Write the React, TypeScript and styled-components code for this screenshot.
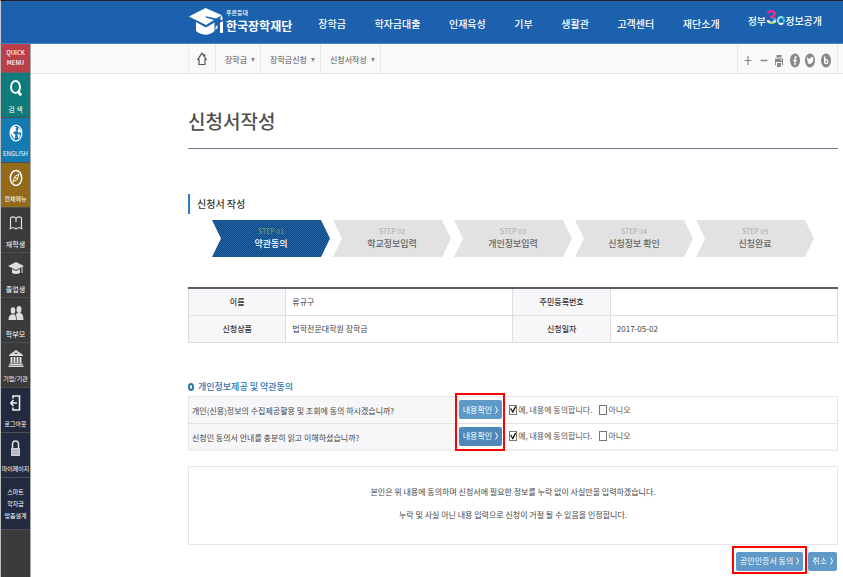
import React from "react";
import styled, { createGlobalStyle } from "styled-components";

const GlobalStyle = createGlobalStyle`
  *, *::before, *::after { box-sizing: border-box; }
  body {
    margin: 0;
    background: #fff;
    color: #444;
    font-family: "Noto Sans CJK KR", "Noto Sans", sans-serif;
    font-size: 8px;
    line-height: 12px;
  }
  a { color: inherit; text-decoration: none; }
  button { font: inherit; cursor: pointer; }
  h1, h2, h3, p, ul, ol { margin: 0; padding: 0; }
  ul, ol { list-style: none; }
`;

const Page = styled.div`
  display: flex;
  flex-direction: column;
  min-height: 100vh;
`;

const Header = styled.header`
  display: flex;
  align-items: center;
  height: 44px;
  padding: 0 21px 0 188px;
  background: #1b61ae;
  border-top: 1px solid #222;
  border-bottom: 1px solid #4a82c4;
  border-left: 1px solid #c4ccd6;
  color: #fff;
`;

const Logo = styled.a`
  display: flex;
  align-items: center;
  gap: 2px;
`;

const LogoText = styled.span`
  display: flex;
  flex-direction: column;
  font-size: 12px;
  font-weight: 700;
  line-height: 18px;
  white-space: nowrap;
`;

const LogoTag = styled.small`
  font-size: 6px;
  font-weight: 500;
  line-height: 8px;
`;

const MainNav = styled.nav`
  display: flex;
  flex: 1;
  justify-content: space-between;
  margin: 4px 28px 0 26px;
  font-size: 10px;
  font-weight: 500;
  line-height: 16px;
  white-space: nowrap;
`;

const GovLink = styled.a`
  display: flex;
  align-items: center;
  height: 42px;
  padding-bottom: 2px;
  font-size: 10px;
  font-weight: 500;
  white-space: nowrap;
`;

const GovThree = styled.span`
  margin-top: -8px;
  background: linear-gradient(#e6318c 50%, #5b9be0 60%, #e8f2f8 68%, #8bc53f 80%);
  background-clip: text;
  color: transparent;
  font-family: "Liberation Sans", sans-serif;
  font-size: 20px;
  font-weight: 700;
  line-height: 24px;
`;

const GovZero = styled.span`
  width: 8px;
  height: 9px;
  margin-bottom: 2px;
  border: 2px solid #8fe3f2;
  border-right-color: #3fc4e8;
  border-bottom-color: #f4f9fb;
  border-radius: 50%;
  color: transparent;
  font-size: 6px;
  line-height: 5px;
  overflow: hidden;
`;

const Body = styled.div`
  display: flex;
  flex: 1;
`;

const Sidebar = styled.nav`
  width: 31px;
  flex: none;
  background: #3b3b3b;
  border-left: 1px solid #bdbdbd;
  border-right: 1px solid #a8a8a8;
  color: #fff;
`;

const QuickTitle = styled.h2`
  display: flex;
  flex-direction: column;
  justify-content: center;
  height: 29px;
  background: #b93f48;
  border-bottom: 1px solid #7b5a5c;
  font-size: 6px;
  font-weight: 500;
  line-height: 10px;
  text-align: center;
`;

const SideLink = styled.a<{ $bg: string; $tall?: boolean; $long?: boolean }>`
  display: flex;
  flex-direction: column;
  align-items: center;
  justify-content: ${(p) => (p.$tall ? "center" : "flex-start")};
  height: ${(p) => (p.$tall ? 52 : 45)}px;
  padding-top: ${(p) => (p.$tall ? 0 : 6)}px;
  background: ${(p) => p.$bg};
  border-bottom: 1px solid #4b4e50;
  font-size: ${(p) => (p.$long ? 6 : 7)}px;
  line-height: 12px;
  text-align: center;
  white-space: nowrap;

  svg { margin-bottom: 5px; }
`;

const Main = styled.div`
  flex: 1;
  min-width: 0;
`;

const SubBar = styled.div`
  display: flex;
  justify-content: space-between;
  height: 30px;
  padding: 0 5px 0 157px;
  background: #f9f9f9;
  border-bottom: 1px solid #e3e3e3;
`;

const Crumbs = styled.div`
  display: flex;
  border-left: 1px solid #ececec;
`;

const HomeLink = styled.a`
  display: flex;
  align-items: center;
  justify-content: center;
  width: 27px;
  border-right: 1px solid #e8e8e8;
`;

const Crumb = styled.button`
  display: flex;
  align-items: center;
  gap: 4px;
  padding: 3px 5px 0 9px;
  background: none;
  border: 0;
  border-right: 1px solid #e8e8e8;
  color: #555;
  white-space: nowrap;

  &::after {
    content: "";
    border: 2px solid transparent;
    border-top: 4px solid #888;
    border-bottom: 0;
  }
`;

const Tools = styled.div`
  display: flex;
  align-items: center;
  justify-content: space-between;
  width: 101px;
  padding: 3px 6px 0 5px;
  border: solid #e8e8e8;
  border-width: 0 1px;
`;

const ToolButton = styled.button`
  display: flex;
  padding: 0;
  background: none;
  border: 0;
`;

const Content = styled.main`
  padding: 0 5px 8px 157px;
`;

const PageTitle = styled.h1`
  height: 75px;
  padding-top: 32px;
  border-bottom: 1px solid #77778c;
  color: #505050;
  font-size: 19px;
  font-weight: 500;
  line-height: 30px;
`;

const SectionTitle = styled.h2`
  margin-top: 45px;
  padding-left: 7px;
  border-left: 2px solid #2580cf;
  color: #333;
  font-size: 10px;
  font-weight: 500;
  line-height: 20px;
`;

const Steps = styled.ol`
  display: flex;
  gap: 3px;
  margin: 6px 24px 30px;
`;

const Step = styled.li<{ $active?: boolean }>`
  display: flex;
  flex: 1;
  flex-direction: column;
  align-items: center;
  height: 37px;
  padding-top: 5px;
  clip-path: polygon(0 0, calc(100% - 9px) 0, 100% 50%, calc(100% - 9px) 100%, 0 100%, 9px 50%);
  background: ${(p) =>
    p.$active
      ? "repeating-conic-gradient(#104b88 0 25%, #2263a4 0 50%) 0 0 / 2px 2px"
      : "#e2e2e2"};
  color: ${(p) => (p.$active ? "#fff" : "#666")};
  font-size: 9px;
  font-weight: 500;
  line-height: 14px;
  white-space: nowrap;

  small {
    color: ${(p) => (p.$active ? "#7da866" : "#aaa")};
    font-size: 7px;
    font-weight: 400;
    line-height: 12px;
  }
`;

const InfoTable = styled.table`
  width: 100%;
  table-layout: fixed;
  border-collapse: collapse;

  th, td {
    height: 27px;
    padding: 0 6px;
    border: 1px solid #dedee0;
    font-weight: 400;
    text-align: left;
  }
  tr:first-child > * { border-top: 2px solid #5d5d66; }
  th {
    background: #f7f7fa;
    color: #333;
    font-weight: 500;
    text-align: center;
  }
`;

const AgreeTitle = styled.h3`
  display: flex;
  align-items: center;
  gap: 4px;
  margin-top: 35px;
  color: #2a75b3;
  font-size: 9px;
  font-weight: 500;
  line-height: 18px;

  &::before {
    content: "";
    width: 6px;
    height: 8px;
    border: 2px solid #2a75a8;
    border-radius: 50%;
  }
`;

const AgreeList = styled.div`
  position: relative;
  border: 1px solid #e6e6e8;
  border-bottom: 2px solid #f0f0f2;
`;

const AgreeRow = styled.fieldset`
  display: grid;
  grid-template-columns: 41% 1fr;
  height: 26px;
  min-width: 0;
  margin: 0;
  padding: 0;
  border: 0;

  & + & { border-top: 1px solid #e3e3e5; }
`;

const Question = styled.p`
  display: flex;
  align-items: center;
  padding: 3px 0 0 3px;
  background: #f7f7fa;
  color: #444;
  white-space: nowrap;
`;

const Answers = styled.div`
  display: flex;
  align-items: center;
  padding-left: 4px;
  color: #555;
`;

const BlueButton = styled.button<{ $dark?: boolean }>`
  display: flex;
  align-items: center;
  justify-content: center;
  gap: 3px;
  height: 19px;
  padding: 0 4px;
  background: ${(p) => (p.$dark ? "#4e89b9" : "#5e99c8")};
  border: 0;
  border-radius: 2px;
  color: #fff;
  white-space: nowrap;
`;

const Check = styled.label`
  display: flex;
  align-items: center;
  gap: 1px;
  margin-left: 7px;
  white-space: nowrap;
`;

const CheckBox = styled.input`
  appearance: none;
  width: 8px;
  height: 10px;
  margin: 0;
  border: 1px solid #777;
  background: #fff;

  &:checked::after {
    content: "";
    display: block;
    height: 8px;
    background: #111;
    clip-path: polygon(0 40%, 18% 30%, 40% 65%, 85% 5%, 100% 20%, 45% 98%);
  }
`;

const RowMark = styled.span`
  position: absolute;
  left: 41%;
  top: -4px;
  width: 50px;
  height: 58px;
  border: 2px solid #f00;
  pointer-events: none;
`;

const Notice = styled.div`
  margin-top: 15px;
  padding: 13px 0 18px;
  border: 1px solid #e6e6e8;
  line-height: 23px;
  text-align: center;
`;

const Actions = styled.div`
  display: flex;
  justify-content: flex-end;
  gap: 5px;
  margin-top: 7px;
  padding-right: 1px;
`;

const Marked = styled.div`
  position: relative;

  &::after {
    content: "";
    position: absolute;
    inset: -6px -4px -3px;
    border: 2px solid #f00;
    pointer-events: none;
  }
`;

const Chevron = () => (
  <svg width="3" height="8" viewBox="0 0 3 8" fill="none" stroke="#fff" aria-hidden="true">
    <path d="M.5.5 2.5 4 .5 7.5" />
  </svg>
);

const CapLogo = () => (
  <svg width="35" height="28" viewBox="0 0 35 28" fill="#fff" aria-hidden="true">
    <path d="M0 8.500 16.500 0 33 7.300 27 10.500 17 8.200 16.500 9.400 25 12 17 17Z" />
    <path d="M7 14 17 19.500 25.500 14.500V23Q17 30.500 7 23Z" />
    <path d="M26.500 19 28.500 17V20L26.500 22Z" />
    <path d="M31.500 9 33 7.500 33.500 10V12H31.500ZM31 14.500 34 13V25H31Z" />
  </svg>
);

const sideIcons: Record<string, React.ReactNode> = {
  search: (
    <g fill="none" stroke="#fff" strokeWidth="2">
      <ellipse cx="7.5" cy="8" rx="4.5" ry="6" />
      <path d="m9.800 12 3.200 4.500" strokeWidth="2.800" />
    </g>
  ),
  globe: (
    <g>
      <ellipse cx="8" cy="9" rx="5.800" ry="7.800" fill="none" stroke="#fff" strokeWidth="1.300" />
      <path fill="#fff" d="M3 5 6 2.500 8.500 3 7.500 5 8.500 6.500 6 8 5 9 7.500 11 7 13.500 6 15.500 4.800 12 3 9.500ZM10 3l2.500 2.500 1 3.500-1.500-1-1.500 1-1-2.500 1-1ZM9.500 10l2.500.500-.5 3-1.500 1Z" />
    </g>
  ),
  compass: (
    <g fill="none" stroke="#fff">
      <ellipse cx="8" cy="9" rx="5.700" ry="7.500" strokeWidth="1.500" />
      <path d="M11 5 9.300 10.500 5 13 6.700 7.500Z" />
      <circle cx="8" cy="9" r=".5" />
    </g>
  ),
  book: (
    <path fill="none" stroke="#ddd" strokeWidth="1.200" d="M8 4.500C6.500 2.500 4 2.500 2.500 3.800V14l-.8 1C4 13.500 6.500 13.500 8 15c1.500-1.500 4-1.500 6.300 0l-.8-1V3.800C12 2.500 9.500 2.500 8 4.500V8" />
  ),
  cap: (
    <g fill="#ddd">
      <path d="M0 7 8 3l8 4-8 4Z" />
      <path d="m4 10 4 2 4-2v4Q8 16 4 14ZM13.500 8h1v6h-1Z" />
    </g>
  ),
  people: (
    <g fill="#ddd">
      <ellipse cx="5" cy="6.500" rx="2.300" ry="3.300" />
      <ellipse cx="11" cy="5.500" rx="2.500" ry="3.500" />
      <path d="M.5 16q0-5 3-5.500h3Q8 11 8 16ZM8.700 16q0-4-1-5.500L9.500 9h3Q15.500 10 15.500 16Z" />
    </g>
  ),
  bank: (
    <path fill="#ddd" d="M1 6 8 1l7 5v1H1Zm5-1h4L8 3.500ZM2.500 8h2v6h-2Zm3 0h2v6h-2Zm3 0h2v6h-2Zm3 0h2v6h-2ZM1.500 14.500h13V16h-13ZM.5 16.500h15V18H.5Z" />
  ),
  logout: (
    <g fill="none" stroke="#eee" strokeWidth="1.600">
      <path d="M5 4.500V2h6.500v14H5v-2.500" />
      <path d="M9 9H3m2.500-3L2.800 9l2.700 3" />
    </g>
  ),
  lock: (
    <g>
      <path d="M4.500 9V5.500Q4.500 2 7.500 2t3 3.500V9" fill="none" stroke="#e5e5e5" strokeWidth="1.500" />
      <path fill="#c9cbd0" d="M3 9h9v8H3Z" />
      <path d="M4 11.500h7M4 14h7" stroke="#9da1ad" />
    </g>
  ),
};

const sideItems = [
  { icon: "search", label: "검 색", bg: "#0e7b7b" },
  { icon: "globe", label: "ENGLISH", bg: "#137bb2" },
  { icon: "compass", label: "전체메뉴", bg: "#93691a" },
  { icon: "book", label: "재학생", bg: "#3b3b3b" },
  { icon: "cap", label: "졸업생", bg: "#3b3b3b" },
  { icon: "people", label: "학부모", bg: "#3b3b3b" },
  { icon: "bank", label: "기업/기관", bg: "#3b3b3b" },
  { icon: "logout", label: "로그아웃", bg: "#222a3f" },
  { icon: "lock", label: "마이페이지", bg: "#222a3f" },
];

const navItems = ["장학금", "학자금대출", "인재육성", "기부", "생활관", "고객센터", "재단소개"];
const crumbs = ["장학금", "장학금신청", "신청서작성"];
const steps = ["약관동의", "학교정보입력", "개인정보입력", "신청정보 확인", "신청완료"];
const questions = [
  "개인(신용)정보의 수집제공활용 및 조회에 동의 하시겠습니까?",
  "신청인 동의서 안내를 충분히 읽고 이해하셨습니까?",
];

const tools: { label: string; art: React.ReactNode }[] = [
  { label: "확대", art: <path d="M5 3v9M1.500 7.500h7" stroke="#888" strokeWidth="1.200" /> },
  { label: "축소", art: <path d="M1.500 7.500h7" stroke="#888" strokeWidth="1.500" /> },
  {
    label: "인쇄",
    art: (
      <g fill="#888">
        <path d="M2.500 2h5v2.500h-5ZM1 5.500h8V12H8V9H2v3H1ZM3 10h4v4H3Z" />
        <path d="M6.500 7h1.500" stroke="#fff" />
      </g>
    ),
  },
  {
    label: "페이스북",
    art: (
      <g>
        <ellipse cx="5" cy="7.500" rx="5" ry="7" fill="#888" />
        <path d="M7 4Q5 3.500 5 5.500V12M3.300 7.500h3.400" fill="none" stroke="#fff" strokeWidth="1.300" />
      </g>
    ),
  },
  {
    label: "트위터",
    art: (
      <g>
        <ellipse cx="5" cy="7.500" rx="5" ry="7" fill="#888" />
        <path d="M2 4q1.200 2 3 2 0-2 1.500-2L8.500 4.500Q8.500 11 4.500 11L2 10l1.500-.8L2.200 7.500Z" fill="#fff" />
      </g>
    ),
  },
  {
    label: "블로그",
    art: (
      <g>
        <ellipse cx="5" cy="7.500" rx="5" ry="7" fill="#888" />
        <path d="M3.700 3.500V10.500" stroke="#fff" strokeWidth="1.300" />
        <ellipse cx="5.300" cy="8.700" rx="1.500" ry="2" fill="none" stroke="#fff" strokeWidth="1.200" />
      </g>
    ),
  },
];

export default function App() {
  return (
    <Page>
      <GlobalStyle />
      <Header>
        <Logo href="#home">
          <CapLogo />
          <LogoText>
            <LogoTag>푸른등대</LogoTag>
            한국장학재단
          </LogoText>
        </Logo>
        <MainNav>
          {navItems.map((n) => (
            <a key={n} href="#menu">{n}</a>
          ))}
        </MainNav>
        <GovLink href="#open">
          정부<GovThree>3</GovThree><GovZero>0</GovZero>정보공개
        </GovLink>
      </Header>
      <Body>
        <Sidebar>
          <QuickTitle><span>QUICK</span><span>MENU</span></QuickTitle>
          {sideItems.map((s) => (
            <SideLink key={s.label} href="#quick" $bg={s.bg} $long={s.label.length > 3}>
              <svg width="16" height="19" viewBox="0 0 16 19" aria-hidden="true">{sideIcons[s.icon]}</svg>
              {s.label}
            </SideLink>
          ))}
          <SideLink href="#smart" $bg="#222a3f" $tall $long>
            <span>스마트</span>
            <span>학자금</span>
            <span>맞춤설계</span>
          </SideLink>
        </Sidebar>
        <Main>
          <SubBar>
            <Crumbs>
              <HomeLink href="#home" aria-label="홈">
                <svg width="10" height="14" viewBox="0 0 10 14" fill="none" stroke="#555" strokeWidth="1.200" aria-hidden="true">
                  <path d="M2 7.500H.8L5 1.200 9.200 7.500H8V12.500H2ZM7.500 4.500V2" />
                </svg>
              </HomeLink>
              {crumbs.map((c) => (
                <Crumb key={c} type="button">{c}</Crumb>
              ))}
            </Crumbs>
            <Tools>
              {tools.map((t) => (
                <ToolButton key={t.label} type="button" aria-label={t.label}>
                  <svg width="10" height="15" viewBox="0 0 10 15" aria-hidden="true">{t.art}</svg>
                </ToolButton>
              ))}
            </Tools>
          </SubBar>
          <Content>
            <PageTitle>신청서작성</PageTitle>
            <SectionTitle>신청서 작성</SectionTitle>
            <Steps>
              {steps.map((s, i) => (
                <Step key={s} $active={i === 0}>
                  <small>STEP 0{i + 1}</small>
                  {s}
                </Step>
              ))}
            </Steps>
            <InfoTable>
              <colgroup>
                <col width="15%" /><col width="35%" /><col width="15%" /><col width="35%" />
              </colgroup>
              <tbody>
                <tr>
                  <th scope="row">이름</th>
                  <td>류규구</td>
                  <th scope="row">주민등록번호</th>
                  <td />
                </tr>
                <tr>
                  <th scope="row">신청상품</th>
                  <td>법학전문대학원 장학금</td>
                  <th scope="row">신청일자</th>
                  <td>2017-05-02</td>
                </tr>
              </tbody>
            </InfoTable>
            <AgreeTitle>개인정보제공 및 약관동의</AgreeTitle>
            <AgreeList>
              {questions.map((q, i) => (
                <AgreeRow key={q} aria-label={q}>
                  <Question>{q}</Question>
                  <Answers>
                    <BlueButton type="button" $dark={i === 1}>내용확인<Chevron /></BlueButton>
                    <Check><CheckBox type="checkbox" defaultChecked />예, 내용에 동의합니다.</Check>
                    <Check><CheckBox type="checkbox" />아니오</Check>
                  </Answers>
                </AgreeRow>
              ))}
              <RowMark />
            </AgreeList>
            <Notice>
              <p>본인은 위 내용에 동의하며 신청서에 필요한 정보를 누락 없이 사실만을 입력하겠습니다.</p>
              <p>누락 및 사실 아닌 내용 입력으로 신청이 거절 될 수 있음을 인정합니다.</p>
            </Notice>
            <Actions>
              <Marked>
                <BlueButton type="button">공인인증서 동의<Chevron /></BlueButton>
              </Marked>
              <BlueButton type="button">취소<Chevron /></BlueButton>
            </Actions>
          </Content>
        </Main>
      </Body>
    </Page>
  );
}
